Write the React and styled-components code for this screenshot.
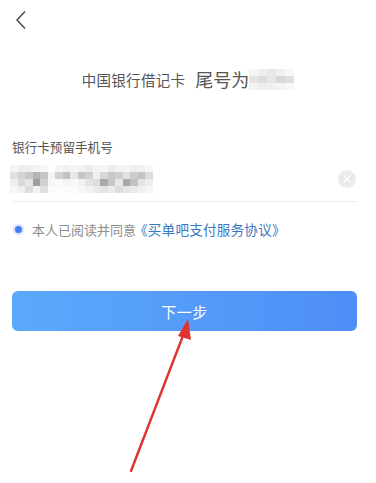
import React from "react";
import styled, { createGlobalStyle } from "styled-components";

const GlobalStyle = createGlobalStyle`
  html, body {
    margin: 0;
    padding: 0;
    background: #ffffff;
  }
  body {
    font-family: "Noto Sans CJK SC", "Noto Sans", sans-serif;
  }
`;

// blurred pixel blocks standing in for the masked digits
const tailCells = [
  ["#f5f5f5", "#eeeeee", "#e9e9e9", "#f0f0f0", "#f7f7f7"],
  ["#e4e4e4", "#dddddd", "#e6e6e6", "#d8d8d8", "#dfdfdf"],
  ["#f3f3f3", "#ededed", "#f0f0f0", "#f4f4f4", "#f8f8f8"],
];

const phoneCells = [
  ["#f4f4f4", "#ededed", "#efefef", "#f3f3f3", "#f7f7f7", "#ffffff", "#f5f5f5", "#f0f0f0", "#f6f6f6", "#f2f2f2", "#ececec", "#f4f4f4", "#f6f6f6", "#eeeeee", "#f3f3f3", "#f5f5f5", "#efefef", "#f1f1f1", "#f7f7f7"],
  ["#e0e0e0", "#d4d4d4", "#c9c9c9", "#b4b4b4", "#c6c6c6", "#f4f4f4", "#d2d2d2", "#c2c2c2", "#e6e6e6", "#c6c6c6", "#d0d0d0", "#f0f0f0", "#d8d8d8", "#c8c8c8", "#cfcfcf", "#e2e2e2", "#cccccc", "#c4c4c4", "#dcdcdc"],
  ["#eeeeee", "#dadada", "#e6e6e6", "#9f9f9f", "#d0d0d0", "#f6f6f6", "#fafafa", "#f4f4f4", "#f8f8f8", "#f2f2f2", "#e4e4e4", "#dedede", "#a9a9a9", "#c8c8c8", "#e8e8e8", "#a8a8a8", "#c2c2c2", "#e4e4e4", "#ececec"],
  ["#f6f6f6", "#f0f0f0", "#dcdcdc", "#f2f2f2", "#e0e0e0", "#fbfbfb", "#fdfdfd", "#fbfbfb", "#fafafa", "#f8f8f8", "#f2f2f2", "#eaeaea", "#e4e4e4", "#ececec", "#dedede", "#e6e6e6", "#eaeaea", "#f0f0f0", "#f6f6f6"],
];

export default function App() {
  return (
    <Page>
      <GlobalStyle />
      <TopBar>
        <Back aria-label="back">
          <svg width="14" height="20" viewBox="0 0 14 20">
            <path d="M11 1.5 L3 10 L11 18.5" fill="none" stroke="#444" strokeWidth="1.4" />
          </svg>
        </Back>
      </TopBar>

      <CardLine>
        <BankName>中国银行借记卡</BankName>
        <TailText>尾号为</TailText>
        <Mosaic>
          {tailCells.map((row, i) => (
            <MosaicRow key={i}>
              {row.map((c, j) => (
                <Cell key={j} $w={9} $h={7} style={{ background: c }} />
              ))}
            </MosaicRow>
          ))}
        </Mosaic>
      </CardLine>

      <Form>
        <Label>银行卡预留手机号</Label>
        <InputRow>
          <Mosaic>
            {phoneCells.map((row, i) => (
              <MosaicRow key={i}>
                {row.map((c, j) => (
                  <Cell key={j} $w={7.5} $h={7} style={{ background: c }} />
                ))}
              </MosaicRow>
            ))}
          </Mosaic>
          <Clear aria-label="clear">
            <svg width="8" height="8" viewBox="0 0 8 8">
              <path d="M1 1 L7 7 M7 1 L1 7" stroke="#ffffff" strokeWidth="1.2" />
            </svg>
          </Clear>
        </InputRow>
        <Divider />

        <Agree>
          <Radio />
          <AgreeText>本人已阅读并同意</AgreeText>
          <Link>《买单吧支付服务协议》</Link>
        </Agree>

        <NextButton>下一步</NextButton>
      </Form>

      <Arrow width="376" height="483" viewBox="0 0 376 483">
        <defs>
          <filter id="soft" x="-20%" y="-20%" width="140%" height="140%">
            <feGaussianBlur stdDeviation="0.5" />
          </filter>
        </defs>
        <g filter="url(#soft)">
          <line x1="131" y1="471" x2="184" y2="333" stroke="#e0302d" strokeWidth="2.4" strokeLinecap="round" />
          <polygon points="188,319 191,340 178,336" fill="#e0302d" />
        </g>
      </Arrow>
    </Page>
  );
}

const Page = styled.div`
  position: relative;
  width: 376px;
  height: 483px;
  overflow: hidden;
  background: #fff;
`;

const TopBar = styled.div`
  height: 40px;
  display: flex;
  align-items: center;
  padding-left: 14px;
`;

const Back = styled.div`
  display: flex;
  align-items: center;
`;

const CardLine = styled.div`
  display: flex;
  align-items: center;
  justify-content: center;
  margin-top: 26px;
  height: 26px;
`;

const BankName = styled.span`
  font-size: 14.5px;
  color: #555;
  letter-spacing: 0.3px;
`;

const TailText = styled.span`
  font-size: 18px;
  color: #555;
  margin-left: 10px;
`;

const Mosaic = styled.div`
  display: flex;
  flex-direction: column;
`;

const MosaicRow = styled.div`
  display: flex;
`;

const Cell = styled.div`
  width: ${(p) => p.$w}px;
  height: ${(p) => p.$h}px;
`;

const Form = styled.div`
  padding: 0 19px 0 12px;
  margin-top: 46px;
`;

const Label = styled.div`
  font-size: 12.6px;
  color: #555;
  line-height: 18px;
`;

const InputRow = styled.div`
  display: flex;
  align-items: center;
  justify-content: space-between;
  margin-top: 8px;
  height: 30px;
  margin-left: -2px;
`;

const Clear = styled.div`
  width: 18px;
  height: 18px;
  border-radius: 50%;
  background: #ebebeb;
  display: flex;
  align-items: center;
  justify-content: center;
  margin-right: 1px;
`;

const Divider = styled.div`
  height: 1px;
  background: #eeeeee;
  margin-top: 7px;
`;

const Agree = styled.div`
  display: flex;
  align-items: center;
  margin-top: 18px;
  height: 18px;
`;

const Radio = styled.span`
  box-sizing: border-box;
  width: 11px;
  height: 11px;
  border-radius: 50%;
  background: #3d7ff2;
  border: 2px solid #d6e4fb;
  margin-left: 1px;
  margin-right: 8px;
`;

const AgreeText = styled.span`
  font-size: 13px;
  color: #8e8e8e;
`;

const Link = styled.span`
  font-size: 13.6px;
  color: #3b78c2;
  margin-left: -2px;
  letter-spacing: 0.2px;
`;

const NextButton = styled.div`
  margin-top: 53px;
  height: 40px;
  border-radius: 6px;
  background: linear-gradient(90deg, #5ba9fb 0%, #4e8ef7 100%);
  color: #fff;
  font-size: 15px;
  display: flex;
  align-items: center;
  justify-content: center;
  letter-spacing: 0.5px;
`;

const Arrow = styled.svg`
  position: absolute;
  left: 0;
  top: 0;
  pointer-events: none;
`;
